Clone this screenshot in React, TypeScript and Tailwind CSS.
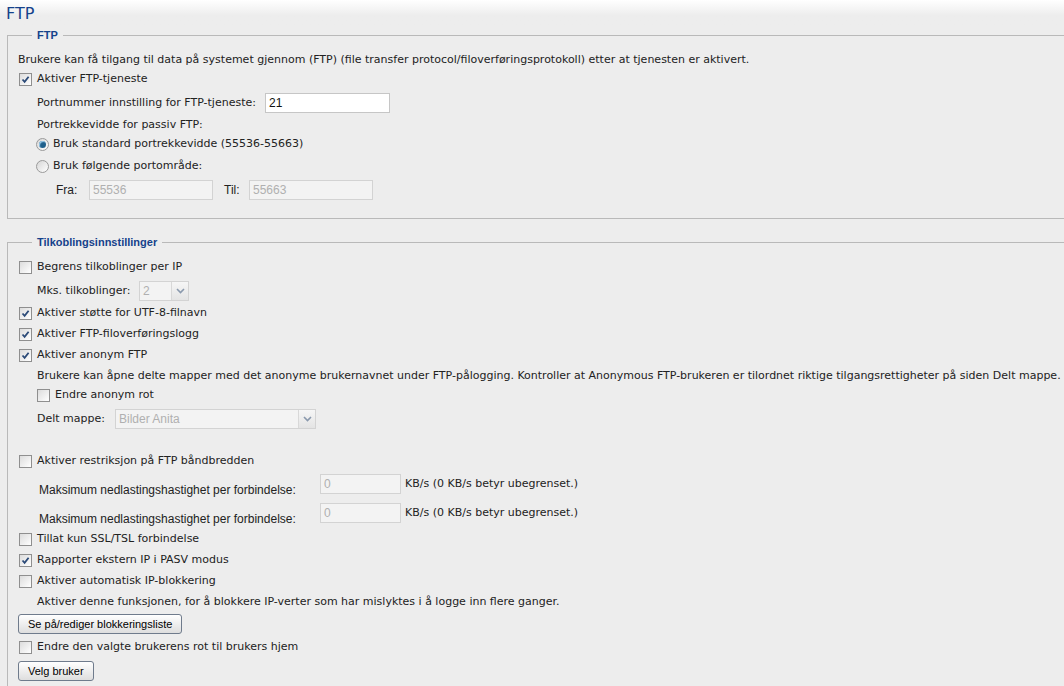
import type { ReactNode } from 'react';

const tahoma = { fontFamily: '"DejaVu Sans", Verdana, sans-serif' };
const arial = { fontFamily: '"Liberation Sans", Arial, sans-serif' };

function Checkbox({ checked = false }: { checked?: boolean }) {
  return (
    <span className="inline-flex w-[13px] h-[13px] shrink-0 items-center justify-center border border-[#8f8f8f] bg-gradient-to-br from-[#dcdcdc] to-white">
      {checked && (
        <svg width="9" height="9" viewBox="0 0 9 9">
          <path d="M1.5 4.5 L3.6 6.8 L7.6 1.8" fill="none" stroke="#2b4a78" strokeWidth="1.8" />
        </svg>
      )}
    </span>
  );
}

function Radio({ checked = false }: { checked?: boolean }) {
  return (
    <span className="inline-flex w-[13px] h-[13px] shrink-0 items-center justify-center rounded-full border border-[#9a9a9a] bg-gradient-to-br from-[#d6d6d6] to-white">
      {checked && (
        <span className="w-[7px] h-[7px] rounded-full bg-[#1f5f8b] shadow-[inset_1px_1px_1px_#9fd0ef]" />
      )}
    </span>
  );
}

function Field({ value, width, disabled = false }: { value: string; width: string; disabled?: boolean }) {
  return (
    <div
      className={`${width} h-[20px] shrink-0 flex items-center px-[3px] border text-[12px] ${
        disabled ? 'bg-[#f3f3f3] border-[#d3d3d3] text-[#b0b0b0]' : 'bg-white border-[#c6c6c6] text-[#111]'
      }`}
      style={arial}
    >
      {value}
    </div>
  );
}

function Select({ value, width }: { value: string; width: string }) {
  return (
    <div className={`${width} h-[20px] shrink-0 flex border border-[#d3d3d3] bg-[#f3f3f3]`}>
      <div className="flex-1 flex items-center px-[3px] text-[12px] text-[#b0b0b0]" style={arial}>
        {value}
      </div>
      <div className="w-[17px] flex items-center justify-center border-l border-[#d8d8d8] bg-gradient-to-b from-[#f6f6f6] to-[#e4e4e4]">
        <svg width="9" height="6" viewBox="0 0 9 6">
          <path d="M1 1 L4.5 4.5 L8 1" fill="none" stroke="#8a99ad" strokeWidth="1.6" />
        </svg>
      </div>
    </div>
  );
}

function Button({ children }: { children: ReactNode }) {
  return (
    <button
      className="h-[20px] px-[9px] rounded-[3px] border border-[#6f7b8c] bg-gradient-to-b from-white to-[#dedede] text-[11px] text-black leading-none"
      style={arial}
    >
      {children}
    </button>
  );
}

function Check({ checked, label, className = '' }: { checked?: boolean; label: string; className?: string }) {
  return (
    <div className={`flex items-center h-[18px] gap-[5px] ${className}`}>
      <Checkbox checked={checked} />
      <span className="whitespace-nowrap">{label}</span>
    </div>
  );
}

function Group({ title, children, className = '' }: { title: string; children: ReactNode; className?: string }) {
  return (
    <fieldset className={`ml-[7px] border border-r-0 border-[#b9b9b9] pl-[10px] ${className}`}>
      <legend className="ml-[14px] px-[5px] text-[11px] font-bold leading-[14px] text-[#15428b]" style={arial}>
        {title}
      </legend>
      {children}
    </fieldset>
  );
}

export default function App() {
  return (
    <div className="w-[1064px] h-[686px] overflow-hidden bg-[#ededed] text-[11px] text-[#222]" style={tahoma}>
      <div className="h-[28px] bg-gradient-to-b from-white to-[#ededed] to-[55%] pl-[6px] pt-[4px]">
        <h1 className="text-[16px] leading-[20px] text-[#15428b]">FTP</h1>
      </div>

      {/* FTP */}
      <Group title="FTP" className="pb-[18px]">
        <div className="mt-[9px] h-[18px] flex items-center whitespace-nowrap">
          Brukere kan få tilgang til data på systemet gjennom (FTP) (file transfer protocol/filoverføringsprotokoll) etter at tjenesten er aktivert.
        </div>
        <Check checked label="Aktiver FTP-tjeneste" className="mt-[1px] ml-[1px]" />
        <div className="mt-[5px] h-[20px] flex items-center pl-[19px]">
          <span className="w-[228px]">Portnummer innstilling for FTP-tjeneste:</span>
          <Field value="21" width="w-[125px]" />
        </div>
        <div className="mt-[3px] h-[18px] flex items-center pl-[19px]">Portrekkevidde for passiv FTP:</div>
        <div className="mt-[1px] h-[18px] flex items-center gap-[4px] pl-[18px]">
          <Radio checked />
          <span>Bruk standard portrekkevidde (55536-55663)</span>
        </div>
        <div className="mt-[4px] h-[18px] flex items-center gap-[4px] pl-[18px]">
          <Radio />
          <span>Bruk følgende portområde:</span>
        </div>
        <div className="mt-[5px] h-[20px] flex items-center pl-[38px] text-[12px]" style={arial}>
          <span className="w-[33px]">Fra:</span>
          <Field value="55536" width="w-[124px]" disabled />
          <span className="ml-[11px] w-[25px]">Til:</span>
          <Field value="55663" width="w-[124px]" disabled />
        </div>
      </Group>

      {/* Tilkoblingsinnstillinger */}
      <Group title="Tilkoblingsinnstillinger" className="mt-[16px] pb-[20px]">
        <Check label="Begrens tilkoblinger per IP" className="mt-[9px] ml-[1px]" />
        <div className="mt-[5px] h-[20px] flex items-center pl-[19px]">
          <span className="w-[102px]">Mks. tilkoblinger:</span>
          <Select value="2" width="w-[50px]" />
        </div>
        <Check checked label="Aktiver støtte for UTF-8-filnavn" className="mt-[3px] ml-[1px]" />
        <Check checked label="Aktiver FTP-filoverføringslogg" className="mt-[3px] ml-[1px]" />
        <Check checked label="Aktiver anonym FTP" className="mt-[3px] ml-[1px]" />
        <div className="mt-[3px] h-[18px] flex items-center pl-[19px] whitespace-nowrap">
          Brukere kan åpne delte mapper med det anonyme brukernavnet under FTP-pålogging. Kontroller at Anonymous FTP-brukeren er tilordnet riktige tilgangsrettigheter på siden Delt mappe.
        </div>
        <Check label="Endre anonym rot" className="mt-[1px] ml-[19px]" />
        <div className="mt-[5px] h-[20px] flex items-center pl-[19px]">
          <span className="w-[78px]">Delt mappe:</span>
          <Select value="Bilder Anita" width="w-[201px]" />
        </div>

        <Check label="Aktiver restriksjon på FTP båndbredden" className="mt-[23px] ml-[1px]" />
        <div className="mt-[4px] h-[24px] flex items-start pl-[21px]">
          <span className="w-[281px] pt-[9px] leading-[14px] text-[12px]" style={arial}>
            Maksimum nedlastingshastighet per forbindelse:
          </span>
          <Field value="0" width="w-[81px]" disabled />
          <span className="ml-[4px] pt-[3px] leading-[14px]">KB/s (0 KB/s betyr ubegrenset.)</span>
        </div>
        <div className="mt-[5px] h-[24px] flex items-start pl-[21px]">
          <span className="w-[281px] pt-[9px] leading-[14px] text-[12px]" style={arial}>
            Maksimum nedlastingshastighet per forbindelse:
          </span>
          <Field value="0" width="w-[81px]" disabled />
          <span className="ml-[4px] pt-[3px] leading-[14px]">KB/s (0 KB/s betyr ubegrenset.)</span>
        </div>
        <Check label="Tillat kun SSL/TSL forbindelse" className="mt-[3px] ml-[1px]" />
        <Check checked label="Rapporter ekstern IP i PASV modus" className="mt-[3px] ml-[1px]" />
        <Check label="Aktiver automatisk IP-blokkering" className="mt-[3px] ml-[1px]" />
        <div className="mt-[3px] h-[18px] flex items-center pl-[19px] whitespace-nowrap">
          Aktiver denne funksjonen, for å blokkere IP-verter som har mislyktes i å logge inn flere ganger.
        </div>
        <div className="mt-[3px] h-[20px] flex items-center">
          <Button>Se på/rediger blokkeringsliste</Button>
        </div>
        <Check label="Endre den valgte brukerens rot til brukers hjem" className="mt-[4px] ml-[1px]" />
        <div className="mt-[5px] h-[20px] flex items-center">
          <Button>Velg bruker</Button>
        </div>
      </Group>
    </div>
  );
}
